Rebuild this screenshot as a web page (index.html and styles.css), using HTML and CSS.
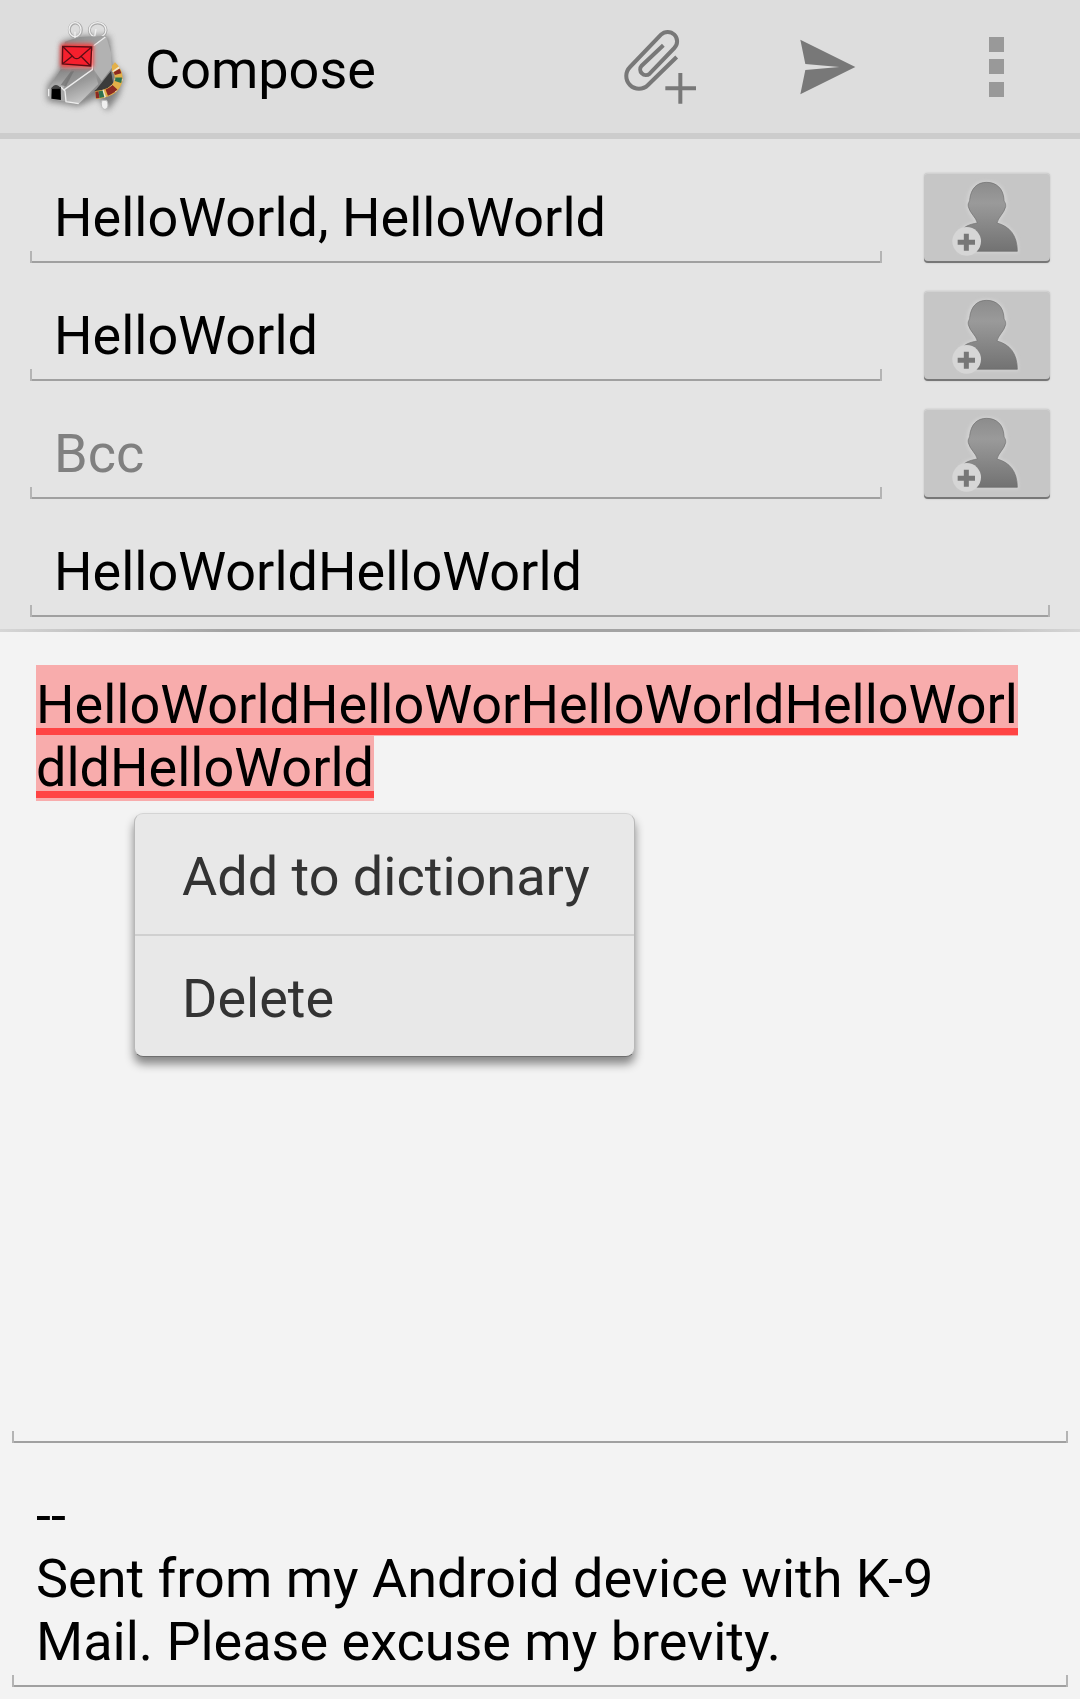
FILE: index.html
```html
<!DOCTYPE html>
<html lang="en">
<head>
<meta charset="utf-8">
<meta name="viewport" content="width=device-width, initial-scale=1">
<title>Compose</title>
<link rel="stylesheet" href="styles.css">
</head>
<body>
<svg class="defs" aria-hidden="true">
  <defs>
    <linearGradient id="person" x1="0" y1="0" x2="0" y2="1">
      <stop offset="0" stop-color="#8c8c8c"/><stop offset=".3" stop-color="#9a9a9a"/><stop offset="1" stop-color="#727272"/>
    </linearGradient>
    <filter id="soft"><feGaussianBlur stdDeviation="4"/></filter>
    <symbol id="add-contact" viewBox="43 38 378 270">
      <g filter="url(#soft)" fill="#d2d2d2" stroke="#d2d2d2" stroke-width="10">
        <path d="M203 188C194 170 178 158 175 139C174 92 194 66 231 66S289 92 288 139C284 158 270 170 262 188C300 198 323 225 323 273H150V220C160 198 180 192 203 188Z"/>
      </g>
      <path fill="url(#person)" stroke="#6e6e6e" stroke-width="2" d="M203 188C200 172 180 158 176 139C174 126 180 126 180 118C184 84 202 66 231 66S281 84 283 118C283 126 289 126 288 139C284 158 265 172 262 188C300 198 323 225 323 273H150V220C160 198 180 192 203 188Z"/>
      <circle cx="171" cy="243" r="43" fill="#d6d6d6"/>
      <path d="M170 220V271M144 246H196" stroke="#777" stroke-width="15"/>
    </symbol>
  </defs>
</svg>
<main class="page">
  <header class="bar">
    <svg class="logo" viewBox="0 0 330 345" aria-hidden="true">
      <defs>
        <linearGradient id="metal" x1="0" y1="0" x2="1" y2="1">
          <stop offset="0" stop-color="#858585"/><stop offset=".5" stop-color="#a5a5a5"/><stop offset="1" stop-color="#707070"/>
        </linearGradient>
        <linearGradient id="snout" x1="0" y1="0" x2=".4" y2="1">
          <stop offset="0" stop-color="#808080"/><stop offset=".5" stop-color="#999"/><stop offset="1" stop-color="#c6c6c6"/>
        </linearGradient>
        <filter id="shade" x="-30%" y="-30%" width="160%" height="160%"><feGaussianBlur stdDeviation="9"/></filter>
        <filter id="glow" x="-30%" y="-30%" width="160%" height="160%"><feGaussianBlur stdDeviation="6"/></filter>
        <filter id="blend" x="-10%" y="-10%" width="120%" height="120%"><feGaussianBlur stdDeviation="1.5"/></filter>
      </defs>
      <path filter="url(#shade)" fill="#6a6a6a" opacity=".8" d="M95 98L150 82L238 80L248 165L284 200L266 260L232 306L205 265L145 292L52 276V230L88 180Z"/>
      <g filter="url(#blend)">
        <g fill="none" stroke="#aaa" stroke-width="9">
          <ellipse cx="136" cy="63" rx="18" ry="21"/><ellipse cx="203" cy="64" rx="25" ry="22"/>
        </g>
        <g fill="none" stroke="#f0f0f0" stroke-width="4">
          <ellipse cx="135" cy="62" rx="18" ry="21"/><ellipse cx="203" cy="63" rx="25" ry="22"/>
          <path d="M135 68V88M198 60L192 94"/>
        </g>
        <path fill="#3a3a3a" d="M190 245L210 215L243 185L250 225L215 252Z"/>
        <path fill="none" stroke="#e3b04a" stroke-width="24" d="M247 169C282 200 270 252 197 258"/>
        <path fill="none" stroke="#f0e6cc" stroke-width="24" stroke-dasharray="5 27" stroke-dashoffset="-14" d="M247 169C282 200 270 252 197 258"/>
        <path fill="none" stroke="#8c2a22" stroke-width="20" stroke-dasharray="12 42" stroke-dashoffset="-20" d="M247 169C282 200 270 252 197 258"/>
        <path fill="none" stroke="#8c2a22" stroke-width="20" stroke-dasharray="20 200" stroke-dashoffset="-84" d="M247 169C282 200 270 252 197 258"/>
        <path fill="none" stroke="#2f7350" stroke-width="20" stroke-dasharray="14 58" stroke-dashoffset="-42" d="M247 169C282 200 270 252 197 258"/>
        <path fill="#f0f0f0" stroke="#bbb" stroke-width="3" d="M216 274L230 274C238 290 232 301 224 301C214 298 212 288 216 274Z"/>
        <path fill="url(#metal)" d="M105 98L148 84L228 80L241 112L246 182L200 240L145 286L100 272L90 180Z"/>
        <path fill="#b2b2b2" d="M190 114L228 82L243 130L246 176L215 216L190 180Z"/>
        <path fill="url(#snout)" d="M93 180L186 182L105 246L90 232L55 240Z"/>
        <path fill="url(#snout)" d="M125 180L190 178L205 225L146 285L105 276L98 242Z"/>
        <path fill="#6f6f6f" opacity=".7" d="M122 188L132 186L108 232L92 228Z"/>
        <path fill="#a8a8a8" d="M55 240C57 225 72 222 92 229L105 246L108 277L98 277L62 270L54 262Z"/>
        <path fill="none" stroke="#ededed" stroke-width="4" d="M191 110L226 84M103 242L187 182V125M92 233L105 246L108 278L146 284M56 262V240"/>
        <path fill="#050505" d="M65 236L92 234L93 273L64 269Z"/>
        <path fill="#444" d="M64 240C69 224 86 224 92 239Z"/>
      </g>
      <rect x="92" y="105" width="98" height="70" rx="6" fill="#ff3838" filter="url(#glow)"/>
      <path fill="#f61f2d" stroke="#5c0d14" stroke-width="4" d="M98 112L185 114L182 171L97 165Z"/>
      <path fill="none" stroke="#5c0d14" stroke-width="4" d="M99 113L132 146Q140 152 148 146L184 115M98 164L127 141M181 170L153 142"/>
    </svg>
    <h1 class="title">Compose</h1>
    <button class="action" type="button" aria-label="Add attachment">
      <svg viewBox="-72 -30 504 399" aria-hidden="true">
        <g fill="none" stroke="#787878" stroke-width="12">
          <path d="M230 141L144 225A38 38 0 1 1 90 171L183 74A28 28 0 0 1 223 114L149 191A17 17 0 0 1 125 167L190 106"/>
          <path d="M196 235H288M241 189V281"/>
        </g>
      </svg>
    </button>
    <button class="action" type="button" aria-label="Send">
      <svg viewBox="432 -30 504 399" aria-hidden="true">
        <path fill="#787878" d="M601 89L766 171L601 253L616 180L718 171L616 162Z"/>
      </svg>
    </button>
    <button class="action" type="button" aria-label="More options">
      <svg viewBox="936 -30 504 399" aria-hidden="true">
        <path fill="#999" d="M1167 81H1212V126H1167ZM1167 147H1212V192H1167ZM1167 216H1212V261H1167Z"/>
      </svg>
    </button>
  </header>

  <form class="fields">
    <div class="row">
      <input class="field entry" type="text" aria-label="To" value="HelloWorld, HelloWorld">
      <button class="contact" type="button" aria-label="Add To contact"><svg aria-hidden="true"><use href="#add-contact"/></svg></button>
    </div>
    <div class="row">
      <input class="field entry" type="text" aria-label="Cc" value="HelloWorld">
      <button class="contact" type="button" aria-label="Add Cc contact"><svg aria-hidden="true"><use href="#add-contact"/></svg></button>
    </div>
    <div class="row">
      <input class="field entry" type="text" aria-label="Bcc" placeholder="Bcc">
      <button class="contact" type="button" aria-label="Add Bcc contact"><svg aria-hidden="true"><use href="#add-contact"/></svg></button>
    </div>
    <div class="row">
      <input class="field entry" type="text" aria-label="Subject" value="HelloWorldHelloWorld">
    </div>
  </form>
  <div class="divider"></div>

  <section class="message">
    <div class="field editor" contenteditable="true" role="textbox" aria-multiline="true" aria-label="Message text" spellcheck="false"><mark class="typo typo-start">HelloWorldHelloWorHelloWorldHelloWorl</mark><mark class="typo typo-end">dldHelloWorld</mark></div>
    <textarea class="field signature" rows="3" aria-label="Signature" spellcheck="false">--
Sent from my Android device with K-9 Mail. Please excuse my brevity.</textarea>
    <div class="popup">
      <button class="option" type="button">Add to dictionary</button>
      <button class="option" type="button">Delete</button>
    </div>
  </section>
</main>
</body>
</html>
```
FILE: styles.css
```css
* {
  box-sizing: border-box;
}

body {
  margin: 0;
  background: #f3f3f3;
  color: #000;
  font: 54px/63px Roboto, "Liberation Sans", sans-serif;
}

button,
input,
textarea {
  margin: 0;
  border: 0;
  border-radius: 0;
  background: none;
  color: inherit;
  font: inherit;
  outline: 0;
}

.defs {
  position: absolute;
  width: 0;
  height: 0;
}

.page {
  display: flex;
  flex-direction: column;
  min-height: 100vh;
}

.bar {
  display: flex;
  align-items: center;
  padding-left: 30px;
  border-bottom: 6px solid #ccc;
  background: #ddd;
}

.logo {
  flex: none;
  width: 110px;
  height: 115px;
}

.title {
  flex: 1;
  margin: 0;
  padding: 6px 0 0 5px;
  font-size: 54px;
  font-weight: 400;
}

.action {
  flex: none;
  width: 168px;
  height: 133px;
  padding: 0;
}

.action svg,
.contact svg {
  display: block;
  width: 100%;
  height: 100%;
}

.fields {
  display: flex;
  flex-direction: column;
  gap: 28px;
  padding: 34px 30px 12px;
  background: #e4e4e4;
}

.row {
  display: flex;
  gap: 42px;
}

.field {
  flex: 1;
  min-width: 0;
  background-image:
    linear-gradient(#b4b4b4, #b4b4b4),
    linear-gradient(#b4b4b4, #b4b4b4),
    linear-gradient(#a0a0a0, #a0a0a0);
  background-position: left bottom, right bottom, left bottom;
  background-repeat: no-repeat;
  background-size: 2px 12px, 2px 12px, 100% 2px;
}

.entry {
  height: 90px;
  padding: 0 24px 2px;
}

.field::placeholder {
  color: #808080;
  opacity: 1;
}

.contact {
  flex: none;
  width: 126px;
  height: 90px;
  padding: 0;
  border-radius: 4px;
  background: #c6c6c6;
  box-shadow: inset 0 -2px #777, inset 0 1px #d2d2d2, 0 0 2px #bbb;
}

.divider {
  height: 3px;
  background: linear-gradient(90deg, #d6d6d6, #a3a3a3 21%, #a3a3a3 79%, #d6d6d6);
}

.message {
  position: relative;
  display: flex;
  flex: 1;
  flex-direction: column;
  padding: 0 12px 12px;
}

.editor {
  padding: 41px 24px 14px;
  outline: 0;
  word-break: break-all;
}

.typo {
  background: linear-gradient(#f44, #f44) left bottom 1px / 100% 7px no-repeat content-box #f8acac;
  background-clip: border-box;
  color: inherit;
}

.typo-start {
  padding-top: 8px;
}

.typo-end {
  padding-bottom: 2px;
}

.signature {
  display: block;
  flex: none;
  width: 100%;
  padding: 41px 24px 14px;
  overflow: hidden;
  resize: none;
}

.popup {
  position: absolute;
  top: 181px;
  left: 134px;
  border: 1px solid #b8b8b8;
  border-top-color: #d4d4d4;
  border-bottom-color: #6e6e6e;
  border-radius: 9px;
  background: #e8e8e8;
  box-shadow: 0 7px 10px rgba(0, 0, 0, .45);
}

.option {
  display: block;
  width: 100%;
  padding: 31px 44px 26px 47px;
  color: #333;
  text-align: left;
  white-space: nowrap;
}

.option + .option {
  border-top: 2px solid #d0d0d0;
}
```
